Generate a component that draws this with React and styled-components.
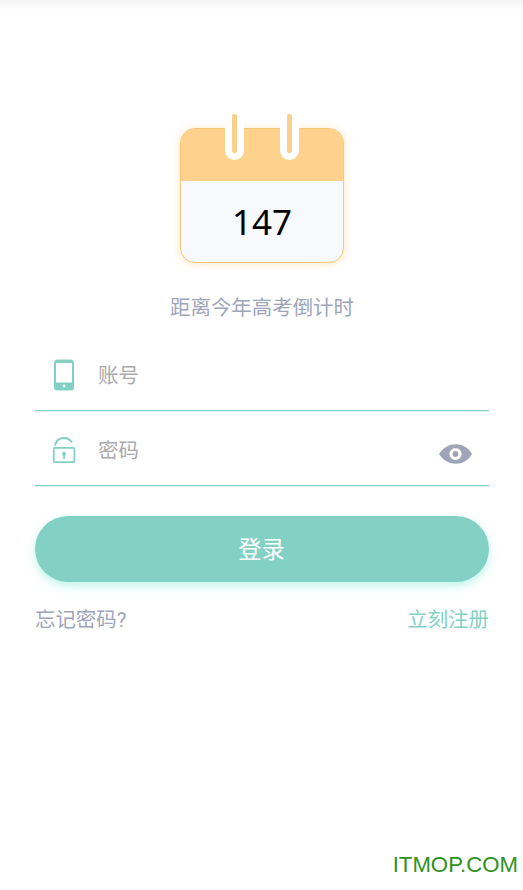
import { useState } from "react";
import styled, { createGlobalStyle } from "styled-components";

const GlobalStyle = createGlobalStyle`
  :root {
    --main: #83d1c5;
    --orange: #fed18c;
    --grey: #9fa5b9;
  }
  * {
    box-sizing: border-box;
    margin: 0;
    padding: 0;
  }
  body {
    background-color: #fff;
    font-family: Roboto, "Noto Sans CJK SC", sans-serif;
  }
`

const StyledPage = styled.div`
  display: flex;
  flex-direction: column;
  height: 890px;
  padding: 114px 34px 0 35px;
  background: linear-gradient(#f5f5f5, #fff 10px);
`

const StyledCalendar = styled.div`
  display: flex;
  flex-direction: column;
  align-self: center;
  width: 164px;
  height: 135px;
  margin-top: 14px;
  border: 1.5px solid #f6c877;
  border-radius: 15px;
  background-color: #f8f9fd;
  box-shadow: 0 1px 8px rgba(254, 209, 140, 0.55);

  .header {
    display: flex;
    justify-content: space-between;
    height: 52px;
    padding: 0 44px;
    border-radius: 13px 13px 0 0;
    background-color: var(--orange);
  }
  .number {
    flex: 1;
    color: #000;
    font-family: "Noto Sans", sans-serif;
    font-size: 35px;
    line-height: 81px;
    text-align: center;
  }
`

const StyledRing = styled.span`
  display: flex;
  justify-content: center;
  width: 19px;
  height: 49px;
  margin-top: -18px;
  padding: 3px 0 7px;
  border-radius: 0 0 10px 10px;
  background-color: #fff;

  &::before {
    content: "";
    width: 4.5px;
    border-radius: 2px;
    background-color: #fbd08d;
  }
`

const StyledTip = styled.p`
  height: 30px;
  margin-top: 30px;
  color: var(--grey);
  font-size: 20.45px;
  line-height: 30px;
  text-align: center;
`

const StyledForm = styled.form`
  display: flex;
  flex-direction: column;
  margin-top: 13px;
`

const StyledField = styled.label`
  display: flex;
  align-items: center;
  height: 75px;
  padding: 4px 16px 0 14px;
  border-bottom: 1px solid var(--main);
  box-shadow: 0 1px 0 rgba(131, 209, 197, 0.3);

  input {
    flex: 1;
    min-width: 0;
    height: 42px;
    margin-left: 19px;
    padding-top: 2px;
    border: none;
    outline: none;
    background: transparent;
    font-family: inherit;
    font-size: 20.45px;
  }
  input::placeholder {
    color: #aaa;
    opacity: 1;
  }
  svg {
    flex: none;
  }
`

const StyledEye = styled.button`
  display: flex;
  margin-top: 7px;
  border: none;
  background: none;
`

const StyledLogin = styled.button`
  height: 66px;
  margin-top: 30px;
  padding: 0 1px 3px 0;
  border: none;
  border-radius: 33px;
  background-color: var(--main);
  box-shadow: 0 4px 10px rgba(155, 240, 222, 0.65);
  color: #fff;
  font-family: inherit;
  font-size: 23.3px;
`

const StyledLinks = styled.div`
  display: flex;
  justify-content: space-between;
  margin-top: 23px;
  font-size: 20.45px;
  line-height: 30px;
`

const StyledLink = styled.a`
  color: ${(props) => (props.$main ? "var(--main)" : "var(--grey)")};
`

const StyledFooter = styled.footer`
  margin: auto -29px 11px auto;
  color: #2f921d;
  font-family: "Liberation Sans", sans-serif;
  font-size: 22.2px;
  line-height: 28px;
`

function PhoneIcon() {
  return (
    <svg width="30" height="34" viewBox="0 0 30 34">
      <rect x="5" y="1.5" width="20" height="31" rx="3.5" fill="#83d1c5" />
      <rect x="7" y="5" width="16" height="19.5" fill="#fff" />
      <circle cx="15" cy="28" r="1.4" fill="#fff" />
    </svg>
  )
}

function LockIcon() {
  return (
    <svg width="30" height="34" viewBox="0 0 30 34" fill="none" stroke="#83d1c5">
      <path d="M6 12.5C8 3.5 18.5 2.5 23 9.5" strokeWidth="2" />
      <rect x="4.8" y="14.8" width="20.6" height="14.4" rx="1" strokeWidth="1.8" />
      <circle cx="15.1" cy="20.8" r="2.1" fill="#83d1c5" stroke="none" />
      <path d="M15.1 21v5" strokeWidth="1.7" />
    </svg>
  )
}

function EyeIcon() {
  return (
    <svg width="34" height="20" viewBox="0 0 34 20">
      <path d="M0 10C8 -3 26 -3 33 10C26 23 8 23 0 10Z" fill="#9fa5b9" />
      <circle cx="16.5" cy="10" r="4.5" fill="none" stroke="#fff" strokeWidth="3.2" />
    </svg>
  )
}

function Calendar({ days }) {
  return (
    <StyledCalendar>
      <div className="header">
        <StyledRing />
        <StyledRing />
      </div>
      <p className="number">{days}</p>
    </StyledCalendar>
  )
}

function App() {
  const [visible, setVisible] = useState(false);

  return (
    <>
      <GlobalStyle />
      <StyledPage>
        <Calendar days={147} />
        <StyledTip>距离今年高考倒计时</StyledTip>
        <StyledForm onSubmit={(e) => e.preventDefault()}>
          <StyledField>
            <PhoneIcon />
            <input type="text" placeholder="账号" />
          </StyledField>
          <StyledField>
            <LockIcon />
            <input type={visible ? "text" : "password"} placeholder="密码" />
            <StyledEye type="button" onClick={() => setVisible(!visible)}>
              <EyeIcon />
            </StyledEye>
          </StyledField>
          <StyledLogin>登录</StyledLogin>
        </StyledForm>
        <StyledLinks>
          <StyledLink>忘记密码?</StyledLink>
          <StyledLink $main>立刻注册</StyledLink>
        </StyledLinks>
        <StyledFooter>ITMOP.COM</StyledFooter>
      </StyledPage>
    </>
  )
}

export default App;
